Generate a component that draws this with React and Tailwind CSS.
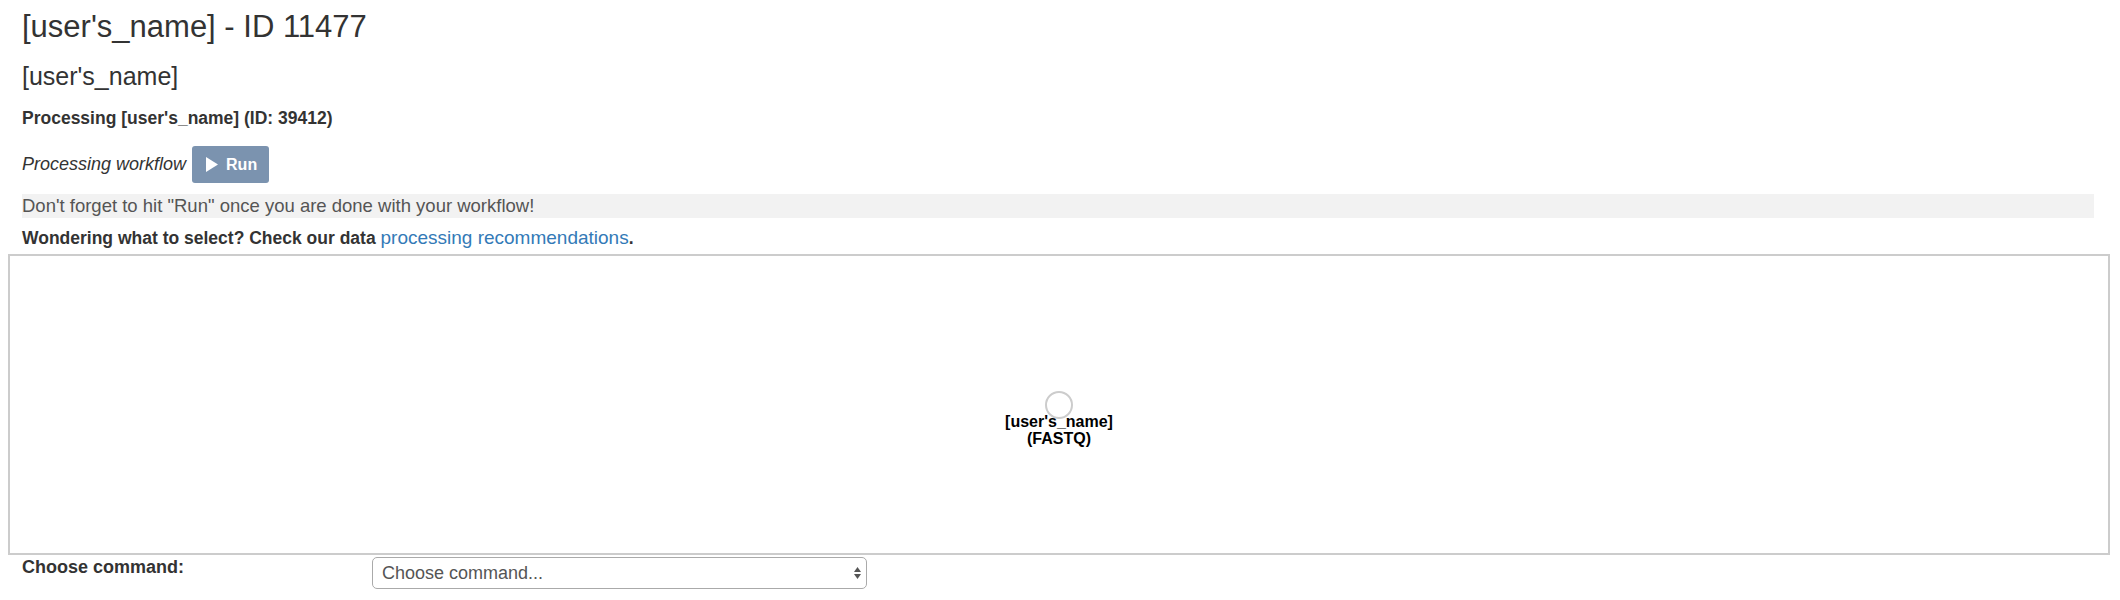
import React from "react";

const PlayIcon = () => (
  <svg width="12" height="15" viewBox="0 0 12 15" className="block">
    <polygon points="0,0 12,7.5 0,15" fill="#ffffff" />
  </svg>
);

const SelectArrows = () => (
  <svg width="7" height="12" viewBox="0 0 7 12" className="block">
    <polygon points="3.5,0 7,5 0,5" fill="#555555" />
    <polygon points="0,7 7,7 3.5,12" fill="#555555" />
  </svg>
);

// workflow canvas with the single input node
const WorkflowCanvas = () => (
  <div className="relative h-[301px] border-2 border-[#cccccc] bg-white">
    <svg className="absolute inset-0 w-full h-full">
      <circle cx="50%" cy="149" r="13" fill="#ffffff" stroke="#cccccc" strokeWidth="2" />
      <g fontFamily="'Liberation Sans', Arial, sans-serif" fontWeight="bold" fontSize="16" fill="#000000" textAnchor="middle">
        <text x="50%" y="171">[user's_name]</text>
        <text x="50%" y="188">(FASTQ)</text>
      </g>
    </svg>
  </div>
);

export default function App() {
  return (
    <div className="font-['Liberation_Sans',Arial,sans-serif] text-[#333333] bg-white pl-[8px] pr-[10px] min-h-[600px]">
      <div className="pl-[14px] pr-[16px]">
        <h2 className="pt-[10px] text-[31px] leading-[33px]">[user's_name] - ID 11477</h2>
        <h3 className="mt-[20px] text-[25px] leading-[26px]">[user's_name]</h3>
        <h4 className="mt-[20px] text-[17.5px] leading-[19px] font-bold">Processing [user's_name] (ID: 39412)</h4>

        <div className="mt-[18px] flex items-center gap-[6px] h-[37px]">
          <span className="italic text-[18px]">Processing workflow</span>
          <button className="h-[37px] w-[77px] rounded-[3px] bg-[#7b93af] text-white flex items-center pl-[14px] gap-[8px]">
            <PlayIcon />
            <span className="text-[16px] font-bold">Run</span>
          </button>
        </div>

        <div className="mt-[11px] h-[24px] leading-[24px] bg-[#f2f2f2] text-[18.5px] text-[#555555]">
          Don't forget to hit "Run" once you are done with your workflow!
        </div>

        <p className="mt-[8px] leading-[24px] text-[17.5px] font-bold">
          Wondering what to select? Check our data{" "}
          <a href="#" className="text-[#337ab7] font-normal text-[19px]">processing recommendations</a>.
        </p>
      </div>

      <div className="mt-[4px]">
        <WorkflowCanvas />
      </div>

      <div className="mt-[2px] flex">
        <label className="w-[364px] pl-[14px] leading-[20px] text-[18px] font-bold">Choose command:</label>
        <div className="relative w-[495px] h-[32px]">
          <select className="appearance-none w-full h-full border border-[#aaaaaa] rounded-[5px] bg-white pl-[9px] text-[18px] text-[#555555] outline-none">
            <option>Choose command...</option>
          </select>
          <div className="absolute right-[6px] top-[10px] pointer-events-none">
            <SelectArrows />
          </div>
        </div>
      </div>
    </div>
  );
}
